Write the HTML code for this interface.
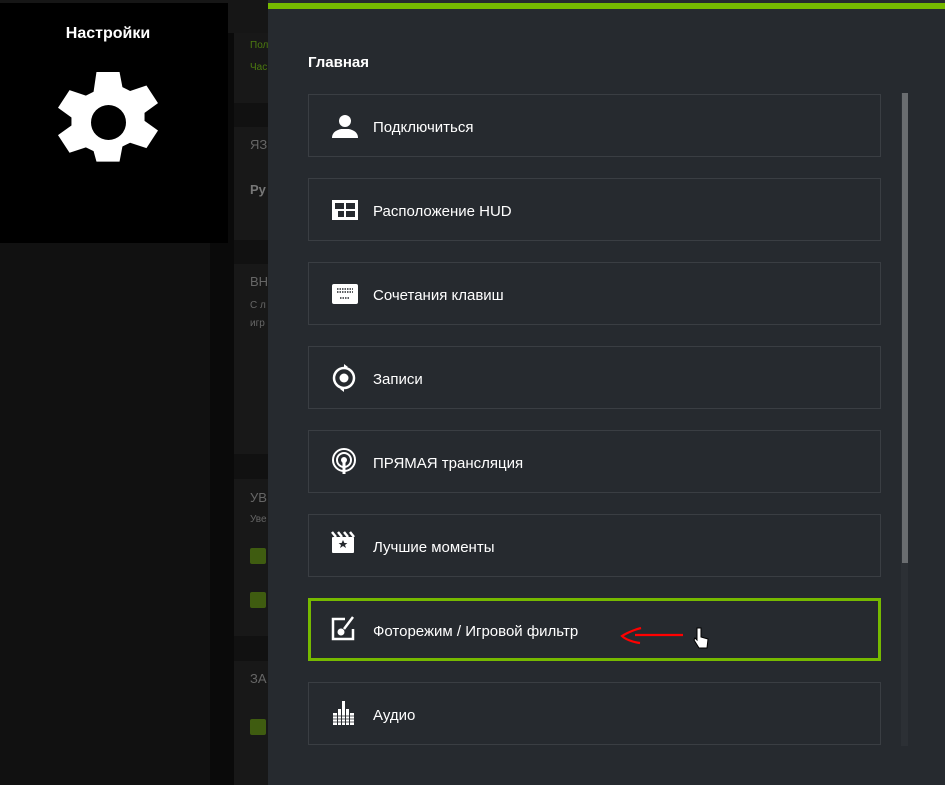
<!DOCTYPE html>
<html><head><meta charset="utf-8"><style>
*{margin:0;padding:0;box-sizing:border-box}
body{width:945px;height:785px;overflow:hidden;background:#111;font-family:"Liberation Sans",sans-serif;position:relative}
.a{position:absolute}
.card{position:absolute;left:308px;width:573px;height:63px;border:1px solid #3a3e43;background:#262a2f;color:#fff;font-size:15px}
.card span{position:absolute;left:64px;top:24px}
.card svg{position:absolute;left:22px;top:18px}
.mid{position:absolute;left:234px;width:40px;background:#181818}
.gt{position:absolute;color:#666;font-size:13px;left:250px}
.cb{position:absolute;left:250px;width:16px;height:16px;background:#3f5c10;border-radius:2px}
</style></head><body>
<div class="a" style="left:0;top:0;width:945px;height:33px;background:#161616"></div>
<div class="a" style="left:210px;top:33px;width:24px;height:752px;background:#0a0a0a"></div>
<div class="mid" style="top:33px;height:70px"></div>
<div class="gt" style="top:40px;font-size:10px;color:#4c7a10">Пол</div>
<div class="gt" style="top:62px;font-size:10px;color:#4c7a10">Час</div>
<div class="mid" style="top:127px;height:113px"></div>
<div class="gt" style="top:137px">ЯЗ</div>
<div class="gt" style="top:182px;font-weight:bold;color:#777">Ру</div>
<div class="mid" style="top:264px;height:190px"></div>
<div class="gt" style="top:274px">ВН</div>
<div class="gt" style="top:300px;font-size:10px">С л</div>
<div class="gt" style="top:318px;font-size:10px">игр</div>
<div class="mid" style="top:479px;height:157px"></div>
<div class="gt" style="top:490px">УВ</div>
<div class="gt" style="top:514px;font-size:10px">Уве</div>
<div class="cb" style="top:548px"></div><div class="cb" style="top:592px"></div>
<div class="mid" style="top:661px;height:124px"></div>
<div class="gt" style="top:671px">ЗА</div>
<div class="cb" style="top:719px"></div>
<div class="a" style="left:0;top:3px;width:228px;height:240px;background:#000"></div>
<div class="a" style="left:0;top:25px;width:216px;text-align:center;color:#fff;font-weight:bold;font-size:16px">Настройки</div>
<svg class="a" style="left:58px;top:72px" width="100" height="101" viewBox="1.6 0.2 20.8 24" preserveAspectRatio="none"><path fill="#fff" d="M9.6 0h4.8l.6 3.6 1.6.9 3.4-1.3 2.4 4.2-2.8 2.3v1.9l2.8 2.3-2.4 4.2-3.4-1.3-1.6.9-.6 3.6H9.6L9 18.8l-1.6-.9L4 19.2 1.6 15l2.8-2.3v-1.9L1.6 8.5 4 4.3l3.4 1.3L9 4.7z" transform="translate(0 0.2)"/></svg>
<div class="a" style="left:91px;top:105px;width:35px;height:35px;border-radius:50%;background:#000"></div>
<div class="a" style="left:268px;top:0;width:677px;height:785px;background:#262a2f"></div>
<div class="a" style="left:268px;top:3px;width:677px;height:6px;background:#76b900"></div>
<div class="a" style="left:308px;top:54px;color:#fff;font-weight:bold;font-size:15px">Главная</div>
<div class="a" style="left:901px;top:93px;width:7px;height:653px;background:#2c3035"></div>
<div class="a" style="left:902px;top:93px;width:6px;height:470px;background:#6a6d70"></div>
<div class="card" style="top:94px"><svg width="28" height="26" viewBox="0 0 28 26"><circle cx="14" cy="8" r="6" fill="#fff"/><path d="M1 25c0-6 5-8 9-9h8c4 1 9 3 9 9z" fill="#fff"/></svg><span>Подключиться</span></div>
<div class="card" style="top:178px"><svg width="28" height="26" viewBox="0 0 28 26"><path d="M1 3h26v20H1z" fill="#fff"/><path d="M4 6h9v6H4zM15 6h9v6h-9zM15 14h9v6h-9zM7 14h6v6H7z" fill="#262a2f"/></svg><span>Расположение HUD</span></div>
<div class="card" style="top:262px"><svg width="28" height="26" viewBox="0 0 28 26"><rect x="1" y="3" width="26" height="20" rx="2" fill="#fff"/><path d="M6 8h16M6 11h16M9 17h10" stroke="#262a2f" stroke-width="1.5" stroke-dasharray="1.5 1"/></svg><span>Сочетания клавиш</span></div>
<div class="card" style="top:346px"><svg width="28" height="30" viewBox="0 0 28 30" style="top:16px"><circle cx="13" cy="15" r="10" fill="none" stroke="#fff" stroke-width="2.5"/><circle cx="13" cy="15" r="4.5" fill="#fff"/><path d="M13 1l4 3-4 2zM13 29l-4-3 4-2z" fill="#fff"/></svg><span>Записи</span></div>
<div class="card" style="top:430px"><svg width="28" height="28" viewBox="0 0 28 28" style="top:16px"><circle cx="13" cy="13" r="11" fill="none" stroke="#fff" stroke-width="2"/><circle cx="13" cy="13" r="7" fill="none" stroke="#fff" stroke-width="2"/><circle cx="13" cy="13" r="3" fill="#fff"/><path d="M13 13v14" stroke="#fff" stroke-width="3"/></svg><span>ПРЯМАЯ трансляция</span></div>
<div class="card" style="top:514px"><svg width="28" height="28" viewBox="0 0 28 28" style="top:16px"><rect x="1" y="6" width="22" height="16" rx="1" fill="#fff"/><path d="M1 1l4 5M7 1l4 5M13 1l4 5M19 1l4 5" stroke="#fff" stroke-width="2.5"/><path d="M12 9l1.4 3h3l-2.4 2 1 3-3-2-3 2 1-3-2.4-2h3z" fill="#262a2f"/></svg><span>Лучшие моменты</span></div>
<div class="card" style="top:598px;border:3px solid #76b900"><svg width="28" height="28" viewBox="0 0 28 28" style="left:20px;top:14px"><path d="M14 4H2v20h20V14" fill="none" stroke="#fff" stroke-width="2.5"/><path d="M22 2L13 14" stroke="#fff" stroke-width="2.5"/><circle cx="10" cy="17" r="3.5" fill="#fff"/></svg><span style="left:62px;top:22px">Фоторежим / Игровой фильтр</span>
<svg class="a" style="left:306px;top:26px" width="80" height="22" viewBox="0 0 80 22"><path d="M66 8H18M24 1C16 3 8 7 5 9c3 3 10 6 18 7" fill="none" stroke="#f00" stroke-width="2.2"/></svg>
<svg class="a" style="left:382px;top:26px" width="16" height="22" viewBox="0 0 16 22"><path d="M4 1v12l-2-2-1 2 5 8h8l1-9-7-2V1z" fill="#fff" stroke="#000"/></svg></div>
<div class="card" style="top:682px"><svg width="28" height="28" viewBox="0 0 28 28" style="top:16px"><path d="M2 14h4v12H2zM7 10h3v16H7zM11 2h3v24h-3zM15 10h3v16h-3zM19 14h4v12h-4z" fill="#fff"/><path d="M2 17h21M2 20h21M2 23h21" stroke="#262a2f" stroke-width="0.8"/></svg><span>Аудио</span></div>
</body></html>
